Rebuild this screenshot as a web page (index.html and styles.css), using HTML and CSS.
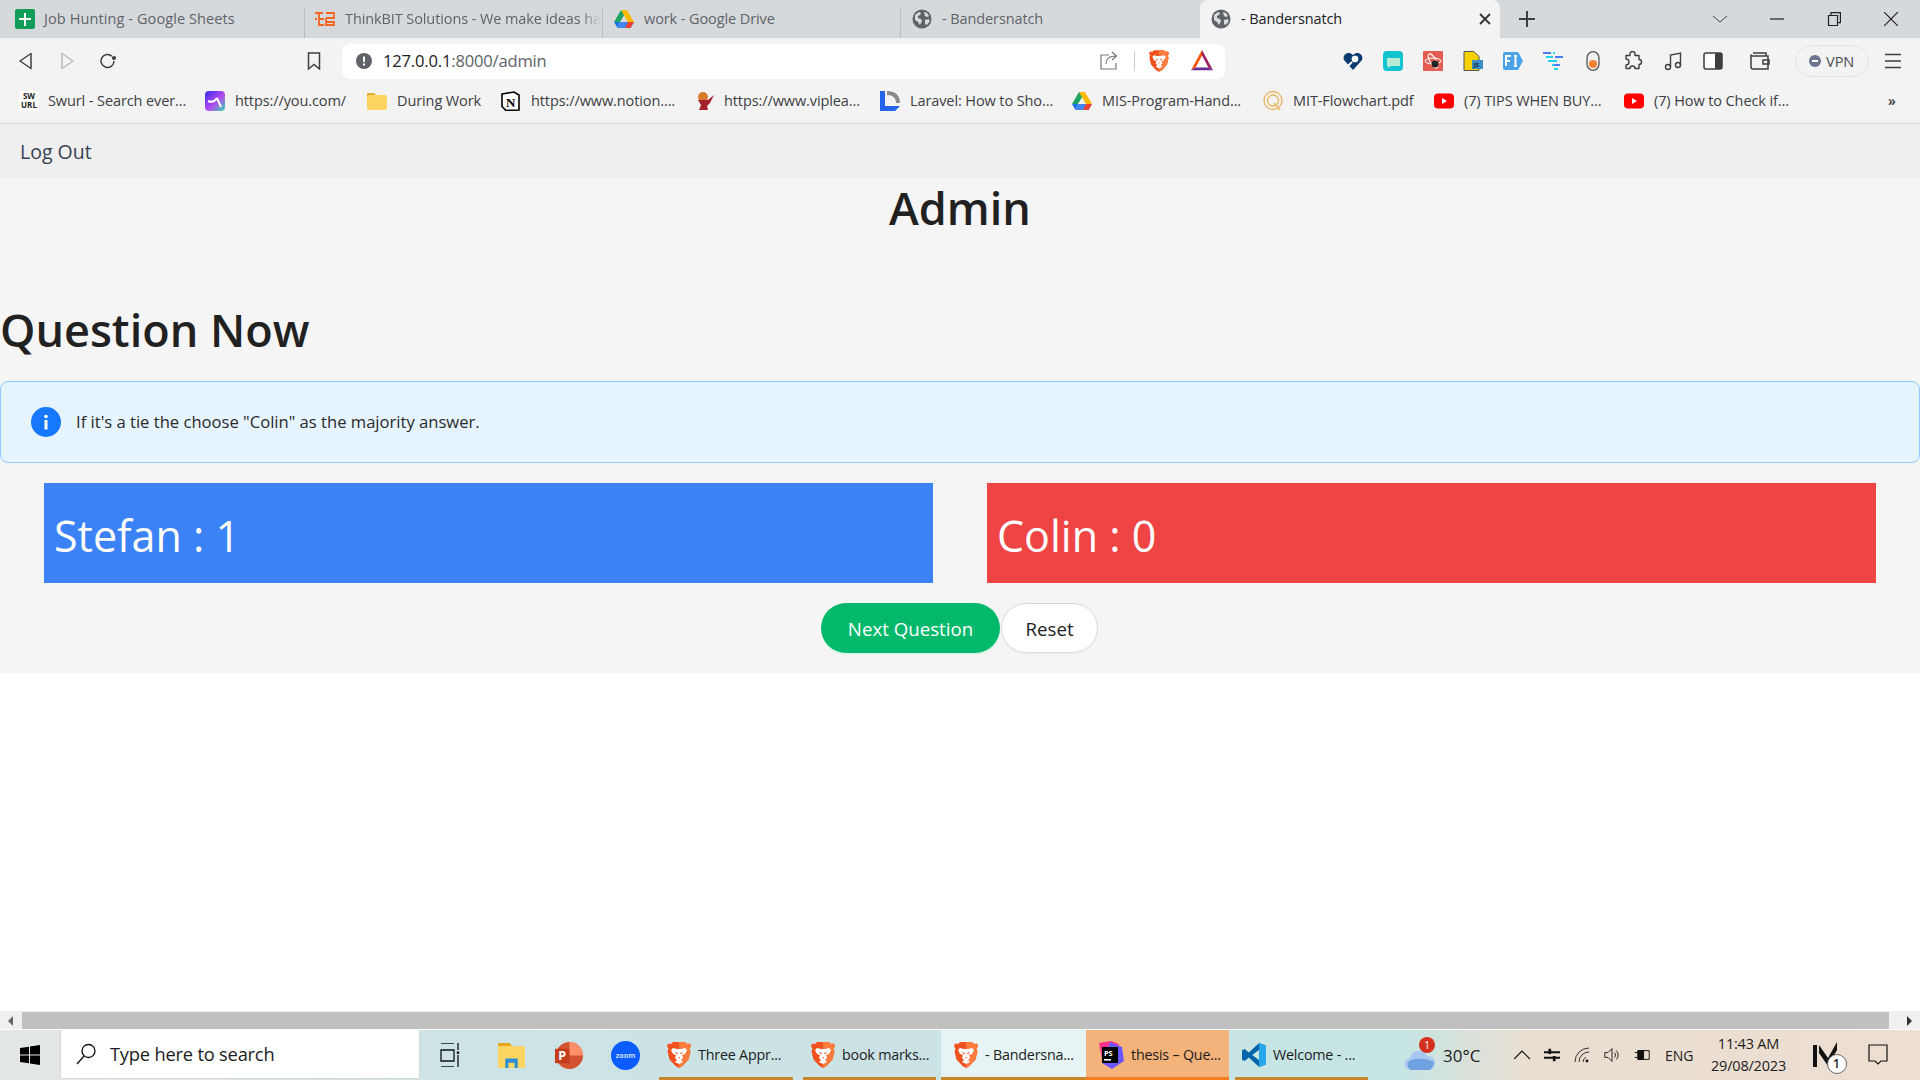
FILE: index.html
```html
<!DOCTYPE html>
<html lang="en">
<head>
<meta charset="utf-8">
<title>Bandersnatch</title>
<link rel="stylesheet" href="styles.css">
</head>
<body>
<svg class="defs" width="0" height="0">
  <symbol id="brave" viewBox="0 0 24 28">
    <path fill="#f1501f" d="M6 1h12l2 2 3-.5 1 3-1.500 2 1 3-2 8-6 6.500-3.500 2-3.500-2-6-6.500-2-8 1-3L0 5.500l1-3 3 .5z"/>
    <path fill="#ff7b3e" d="M12 1h6l2 2 3-.5 1 3-1.500 2 1 3-2 8-6 6.500-3.500 2z"/>
    <path fill="#fff" d="M6 7l4 1h4l4-1 2 2-2 4-3 1 1 3-2 2 2 2-4 2-4-2 2-2-2-2 1-3-3-1-2-4z"/>
    <path fill="#f1501f" d="M8 11l3 1-1 1.500zM16 11l-3 1 1 1.500zM11 16h2l-1 1.500z"/>
  </symbol>
  <symbol id="globe" viewBox="0 0 20 20">
    <circle cx="10" cy="10" r="9.500" fill="#5f6368"/>
    <path fill="#d8dbde" d="M3 6l4-3 2 1-1 2-2 1v2l3 1 1 2-2 4-2-3-3-2zM12 3l3 1 2 3-2 1-2-1zM13 11l4-1 .5 3-3 3-1.500-1z"/>
  </symbol>
  <symbol id="drive" viewBox="0 0 20 18">
    <path fill="#1fa463" d="M7 0h6L6 12H0z"/>
    <path fill="#ffba00" d="M7 0h6l7 12h-6z"/>
    <path fill="#4285f4" d="M3.500 18h13L20 12H6z"/>
    <path fill="#ea4335" d="M14 12h6l-3.500 6H11z"/>
    <path fill="#1a73e8" d="M0 12h6l-2.500 6z"/>
  </symbol>
  <symbol id="yt" viewBox="0 0 20 15">
    <rect width="20" height="15" rx="4" fill="#f00"/>
    <path fill="#fff" d="M8 4.500l5 3-5 3z"/>
  </symbol>
</svg>

<header class="tabstrip">
  <div class="tab sep"><svg class="fav" viewBox="0 0 20 20"><rect width="20" height="20" rx="2" fill="#0f9d58"/><path fill="#fff" d="M9 4h2v5h5v2h-5v6H9v-6H4V9h5z"/></svg><span class="tab-text">Job Hunting - Google Sheets</span></div>
  <div class="tab sep"><svg class="fav" viewBox="0 0 20 16" fill="none" stroke="#f26522" stroke-width="1.800"><path d="M0 2h8M11 2h8v5h-8M4 2v6h5M0 8h2M4 8v6h5M11 7v7h8v-3h-8"/></svg><span class="tab-text fade">ThinkBIT Solutions - We make ideas ha</span></div>
  <div class="tab sep"><svg class="fav"><use href="#drive"/></svg><span class="tab-text">work - Google Drive</span></div>
  <div class="tab"><svg class="fav"><use href="#globe"/></svg><span class="tab-text">- Bandersnatch</span></div>
  <div class="tab active"><svg class="fav"><use href="#globe"/></svg><span class="tab-text">- Bandersnatch</span>
    <svg class="tab-close" viewBox="0 0 12 12" fill="none" stroke="#333" stroke-width="1.800"><path d="M1 1l10 10M11 1L1 11"/></svg></div>
  <svg class="newtab" viewBox="0 0 16 16" fill="none" stroke="#3c4043" stroke-width="2"><path d="M8 0v16M0 8h16"/></svg>
  <div class="wincontrols">
    <svg class="wc" viewBox="0 0 14 14" fill="none" stroke="#444" stroke-width="1"><path d="M0 4l7 6 7-6"/></svg>
    <svg class="wc" viewBox="0 0 14 14" fill="none" stroke="#222" stroke-width="1.200"><path d="M0 7h14"/></svg>
    <svg class="wc" viewBox="0 0 14 14" fill="none" stroke="#222" stroke-width="1.200"><path d="M1.500 3.500h9v10h-9zM4 3.500V.6h9.400v10h-3"/></svg>
    <svg class="wc" viewBox="0 0 14 14" fill="none" stroke="#222" stroke-width="1.200"><path d="M0 0l14 14M14 0L0 14"/></svg>
  </div>
</header>

<nav class="toolbar">
  <div class="navbtns">
    <svg class="tb" viewBox="0 0 20 20" fill="none" stroke="#3c4043" stroke-width="1.500" stroke-linejoin="round"><path d="M15 2.500v15L4 10z"/></svg>
    <svg class="tb" viewBox="0 0 20 20" fill="none" stroke="#b8babc" stroke-width="1.500" stroke-linejoin="round"><path d="M5 2.500v15L16 10z"/></svg>
    <svg class="tb" viewBox="0 0 20 20" fill="none" stroke="#3c4043" stroke-width="1.500"><path d="M16 10a6.500 6.500 0 1 1-2-4.700"/><circle cx="16" cy="7" r="1.300" fill="#3c4043"/></svg>
  </div>
  <svg class="tb bookmark" viewBox="0 0 20 20" fill="none" stroke="#3c4043" stroke-width="1.500"><path d="M4.500 2h11v16L10 13.500 4.500 18z"/></svg>
  <div class="omnibox">
    <svg class="info" viewBox="0 0 16 16"><circle cx="8" cy="8" r="8" fill="#5f6368"/><path fill="#fff" d="M7 3.500h2V9H7zM7 10.500h2v2H7z"/></svg>
    <span class="url"><span class="url-host">127.0.0.1</span>:8000/admin</span>
    <svg class="tb share" viewBox="0 0 20 20" fill="none" stroke="#777" stroke-width="1.200"><path d="M10 4H2v14h15v-6M7 13c0-5 3-8 10-8M13 1l4.500 4-4.500 4"/></svg>
    <span class="omni-sep"></span>
    <svg class="brave-ic"><use href="#brave"/></svg>
    <svg class="bat" viewBox="0 0 24 24"><path fill="#ff5000" d="M12 0L0 22l5-3 7-13z"/><path fill="#9e1f63" d="M12 0l12 22-5-3-7-13z"/><path fill="#662d91" d="M0 22h24l-5-3H5z"/></svg>
  </div>
  <div class="extensions">
    <svg class="ext" viewBox="0 0 20 20"><path fill="#0a3a6e" d="M10 19L1 9C-1 4 5-1 10 4c5-5 11 0 9 5z"/><circle cx="12" cy="8" r="4" fill="#fff" stroke="#0a3a6e"/><path stroke="#fff" stroke-width="2" d="M9 11l-4 4"/></svg>
    <svg class="ext" viewBox="0 0 20 20"><rect width="20" height="20" rx="4" fill="#12c4cf"/><path fill="#b8ead8" d="M4 7h13v8H8l-3 2v-2H4z"/></svg>
    <svg class="ext" viewBox="0 0 20 20"><rect width="20" height="20" rx="1" fill="#e35d52"/><g fill="none" stroke="#fff"><ellipse cx="10" cy="10" rx="8" ry="3"/><ellipse cx="10" cy="10" rx="8" ry="3" transform="rotate(60 10 10)"/></g><circle cx="12" cy="13" r="3.500" fill="#222"/></svg>
    <svg class="ext" viewBox="0 0 20 20"><path fill="#f7d000" stroke="#555" d="M1 .5h10l5 5v14H1z"/><rect x="9" y="9" width="11" height="9" fill="#3b8ec2"/><text class="ext-js" x="10.500" y="16">JS</text></svg>
    <svg class="ext" viewBox="0 0 20 20"><path fill="#4aa3e8" d="M2 1h13l5 9-5 9H2a2 2 0 0 1-2-2V3a2 2 0 0 1 2-2z"/><path stroke="#fff" stroke-width="2" fill="none" d="M3 15V5h5M3 10h4M11 5h3M11 15h3M12.500 5v10"/></svg>
    <svg class="ext" viewBox="0 0 20 20"><g fill="none" stroke-width="2"><path stroke="#4c7cf3" d="M0 2h8M12 6h8"/><path stroke="#22d3ee" d="M10 2h2M3 6h7M5 10h9M9 14h4M11 18h4"/><path stroke="#4c7cf3" d="M11 14h6"/></g></svg>
    <svg class="ext" viewBox="0 0 20 20"><rect x="4" y="0.700" width="12" height="18.600" rx="6" fill="#eee" stroke="#555" stroke-width="1.300"/><circle cx="10" cy="13" r="4" fill="#f58233"/></svg>
    <svg class="ext" viewBox="0 0 20 20" fill="none" stroke="#3c4043" stroke-width="1.400" stroke-linejoin="round"><path d="M7 3a2.500 2.500 0 0 1 5 0v1.500h4v4a2.500 2.500 0 0 1 0 5v4h-4a2.500 2.500 0 0 0-5 0H3v-3.500a2.500 2.500 0 0 0 0-6V4.500h4z"/></svg>
    <svg class="ext" viewBox="0 0 20 20" fill="none" stroke="#3c4043" stroke-width="1.400"><circle cx="5" cy="16" r="2.500"/><circle cx="15" cy="14" r="2.500"/><path d="M7.500 16V4l10-2v12"/></svg>
    <svg class="ext" viewBox="0 0 20 20"><rect x="1" y="2" width="18" height="16" rx="2" fill="#fff" stroke="#3c4043" stroke-width="1.500"/><rect x="12" y="2" width="7" height="16" fill="#3c4043"/></svg>
    <svg class="ext wallet" viewBox="0 0 20 20" fill="none" stroke="#3c4043" stroke-width="1.500"><path d="M18 5H2.500A1.500 1.500 0 0 1 1 3.500V16a2 2 0 0 0 2 2h15zM3 2h13v3"/><path d="M19 9h-6v4h6z"/></svg>
    <div class="vpn"><span class="vpn-dot"></span><span>VPN</span></div>
    <svg class="ext menu" viewBox="0 0 18 16" fill="none" stroke="#3c4043" stroke-width="1.600"><path d="M1 1.500h16M1 8h16M1 14.500h16"/></svg>
  </div>
</nav>

<div class="bookmarks">
  <div class="bm"><span class="swurl">SW<br>URL</span><span>Swurl - Search ever...</span></div>
  <div class="bm"><svg class="fav" viewBox="0 0 20 20"><defs><linearGradient id="yg" x1="0" y1="0" x2="1" y2="1"><stop offset="0" stop-color="#3a2bf0"/><stop offset=".55" stop-color="#b44bf0"/><stop offset="1" stop-color="#35d6a8"/></linearGradient></defs><rect width="20" height="20" rx="4" fill="url(#yg)"/><path fill="none" stroke="#fff" stroke-width="2" d="M3 10c4 2 7 0 9-3M12 7l4 9"/></svg><span>https://you.com/</span></div>
  <div class="bm"><svg class="fav" viewBox="0 0 20 20"><path fill="#e8ad2a" d="M0 3a1 1 0 0 1 1-1h6l2 2h10v3H0z"/><rect y="4" width="20" height="15" rx="2" fill="#fcd462"/></svg><span>During Work</span></div>
  <div class="bm"><svg class="fav" viewBox="0 0 20 20"><path fill="#fff" stroke="#000" stroke-width="1.600" d="M1 3l12-2 5 3v15l-13 .5-4-4z"/><text class="notion-n" x="5" y="16">N</text></svg><span>https://www.notion....</span></div>
  <div class="bm"><svg class="fav" viewBox="0 0 20 20"><circle cx="9" cy="6" r="5" fill="#d97b2c"/><path fill="#a3222c" d="M4 9h10l6-5-4 8-3 3 1 4H5l2-5z"/></svg><span>https://www.viplea...</span></div>
  <div class="bm"><svg class="fav" viewBox="0 0 20 20"><path fill="#2563eb" d="M0 0h5v15h15l-5 5H0z"/><path fill="#8a8a8a" d="M7 0c8 0 13 4 13 12h-4c0-5-3-8-9-8z"/></svg><span>Laravel: How to Sho...</span></div>
  <div class="bm"><svg class="fav"><use href="#drive"/></svg><span>MIS-Program-Hand...</span></div>
  <div class="bm"><svg class="fav" viewBox="0 0 20 20" fill="none" stroke="#eab35c" stroke-width="1.300"><circle cx="10" cy="9.500" r="9"/><circle cx="10" cy="9.500" r="5.500"/><path d="M11 12l6 7"/></svg><span>MIT-Flowchart.pdf</span></div>
  <div class="bm"><svg class="fav"><use href="#yt"/></svg><span>(7) TIPS WHEN BUY...</span></div>
  <div class="bm"><svg class="fav"><use href="#yt"/></svg><span>(7) How to Check if...</span></div>
  <div class="bm-more">»</div>
</div>

<main class="page">
  <div class="navbar"><a class="logout">Log Out</a></div>
  <h1 class="title">Admin</h1>
  <h2 class="subtitle">Question Now</h2>
  <div class="alert">
    <svg class="alert-icon" viewBox="0 0 30 30"><circle cx="15" cy="15" r="15" fill="#1677ff"/><rect x="13.500" y="13" width="3" height="9.500" fill="#fff"/><circle cx="15" cy="9.500" r="1.800" fill="#fff"/></svg>
    <span class="alert-text">If it's a tie the choose "Colin" as the majority answer.</span>
  </div>
  <section class="scores">
    <div class="score blue">Stefan : 1</div>
    <div class="score red">Colin : 0</div>
  </section>
  <div class="actions">
    <button class="btn primary">Next Question</button>
    <button class="btn">Reset</button>
  </div>
</main>

<div class="spacer"></div>

<div class="hscroll">
  <span class="sc-btn"><span class="arrow-l"></span></span>
  <span class="sc-thumb"></span>
  <span class="sc-btn"><span class="arrow-r"></span></span>
</div>

<footer class="taskbar">
  <svg class="start" viewBox="0 0 20 20"><path fill="#000" d="M0 3l9-1.300V9.500H0zM10 1.500L20 0v9.500H10zM0 10.500h9v7.800L0 17zM10 10.500h10V20l-10-1.500z"/></svg>
  <div class="search">
    <svg class="search-ic" viewBox="0 0 20 22" fill="none" stroke="#111" stroke-width="1.300"><circle cx="12.500" cy="8" r="6.500"/><path d="M8 13l-7 8"/></svg>
    <span class="search-text">Type here to search</span>
  </div>
  <div class="pinned">
    <svg class="pin" viewBox="0 0 20 24" fill="none" stroke="#111" stroke-width="1.300"><path d="M1 0h13M1 7h13v11H1zM1 24h13M18 0v7M18 12v12"/><rect x="16.800" y="8.500" width="2.400" height="2.400" fill="#111" stroke="none"/></svg>
    <svg class="pin" viewBox="0 0 28 28"><path fill="#e8a317" d="M1 2h11l3 3H1z"/><rect x="1" y="5" width="26" height="21" fill="#fcd462"/><path fill="#2c8fd6" d="M8 26V17h12v9h-3v-5h-6v5z"/></svg>
    <svg class="pin" viewBox="0 0 30 30"><circle cx="16" cy="15" r="14" fill="#d35230"/><path fill="#ff8f6b" d="M16 1a14 14 0 0 1 14 14H16z"/><rect x="1" y="8" width="15" height="15" rx="1" fill="#c43e1c"/><text class="ppt-p" x="4.500" y="20">P</text></svg>
    <svg class="pin" viewBox="0 0 30 30"><circle cx="15" cy="15" r="15" fill="#0b5cff"/><text class="zoom-t" x="15" y="17.500">zoom</text></svg>
  </div>
  <div class="apps">
    <div class="app"><svg class="app-ic"><use href="#brave"/></svg><span>Three Appr...</span></div>
    <div class="app app-second"><svg class="app-ic"><use href="#brave"/></svg><span>book marks...</span></div>
    <div class="app app-current"><svg class="app-ic"><use href="#brave"/></svg><span>- Bandersna...</span></div>
    <div class="app app-attn"><svg class="app-ic" viewBox="0 0 28 28"><path fill="#ff318c" d="M3 2l12-2 8 3-3 10-14 5z"/><path fill="#6b57ff" d="M14 1l12 5 2 14-12 8-10-6z"/><rect x="6" y="6" width="16" height="16" fill="#000"/><text class="ps-t" x="8" y="14.500">PS</text><rect x="8" y="18" width="7" height="1.600" fill="#fff"/></svg><span>thesis – Que...</span></div>
    <div class="app app-vs"><svg class="app-ic" viewBox="0 0 28 28"><path fill="#0065a9" d="M20 0L8 11 3 7 0 8.500v11L3 21l5-4 12 11 8-3V3zM20 8v12l-8-6z"/><path fill="#28a8ea" d="M20 0l8 3v22l-8 3z"/></svg><span>Welcome - ...</span></div>
  </div>
  <div class="weather">
    <div class="cloud">
      <svg class="cloud-ic" viewBox="0 0 32 22"><path fill="#a8c8f0" d="M7 21a6 6 0 0 1-1-12 9 9 0 0 1 17-2 7 7 0 0 1 2 14z"/><path fill="#6fa0e0" d="M5 12c6-3 16-3 25 1-1 5-3 8-5 8H7a6 6 0 0 1-2-9z"/></svg>
      <span class="badge">1</span>
    </div>
    <span>30°C</span>
  </div>
  <div class="tray">
    <svg class="tray-ic" viewBox="0 0 16 16" fill="none" stroke="#111" stroke-width="1.200"><path d="M0 12l8-8 8 8"/></svg>
    <svg class="tray-ic" viewBox="0 0 18 16" fill="none" stroke="#111" stroke-width="2.200"><path d="M0 5h18M0 11h18"/><path fill="#111" stroke="none" d="M5 1h3v6H5zM10 9h3v6h-3z"/></svg>
    <svg class="tray-ic" viewBox="0 0 16 16" fill="none" stroke="#333" stroke-width="1"><path d="M1 15A14 14 0 0 1 15 1M5 15A10 10 0 0 1 15 5M9 15a6 6 0 0 1 3-5"/><circle cx="13" cy="14" r="1.400" fill="#111" stroke="none"/></svg>
    <svg class="tray-ic" viewBox="0 0 20 18" fill="none" stroke="#111" stroke-width="1.100"><path d="M1 6h4l5-5v16l-5-5H1zM13 6a4 4 0 0 1 0 6M15.500 3.500a8 8 0 0 1 0 11"/></svg>
    <svg class="tray-ic" viewBox="0 0 20 14" fill="none" stroke="#111" stroke-width="1.200"><path d="M5 1.500h14v11H5zM1 4h4M1 10h4"/><rect x="5" y="1.500" width="7" height="11" fill="#111"/></svg>
    <span class="eng">ENG</span>
    <div class="clock"><span>11:43 AM</span><span>29/08/2023</span></div>
    <div class="m-wrap">
      <svg class="m-ic" viewBox="0 0 28 26"><path fill="#111" d="M0 3h4v22H0zM6 3l9 13 9-16v8l-9 16-9-13z"/></svg>
      <span class="m-badge">1</span>
    </div>
    <svg class="notif" viewBox="0 0 20 22" fill="none" stroke="#111" stroke-width="1.200"><path d="M1 1h18v16h-6l-3 3-3-3H1z"/></svg>
  </div>
</footer>
</body>
</html>
```

FILE: styles.css
```css
* { box-sizing: border-box; }
html, body { margin: 0; height: 100%; }
body {
  display: flex;
  flex-direction: column;
  height: 1080px;
  overflow: hidden;
  background: #fff;
  color: #212529;
  font-family: "Open Sans", "Noto Sans", sans-serif;
}
.defs { position: absolute; }
svg { display: block; flex: none; }
span { white-space: nowrap; }

/* Tabs */
.tabstrip {
  display: grid;
  grid-template-columns: 305px 298px 298px 299px 300px 54px 1fr;
  height: 38px;
  background: #d6d9dc;
  align-items: stretch;
}
.tab {
  display: flex;
  align-items: center;
  gap: 10px;
  padding-left: 11px;
  font-size: 14.500px;
  color: #5f6368;
  overflow: hidden;
  letter-spacing: -.1px;
}
.tab:first-child { padding-left: 15px; gap: 9px; letter-spacing: .1px; }
.tab:nth-child(2) { padding-left: 10px; }
.tab.sep { border-right: 1px solid #b9bcc0; margin: 7px 0 0; padding-bottom: 7px; }
.tab.active {
  background: #f3f3f3;
  color: #202124;
  border-radius: 8px 8px 0 0;
  position: relative;
}
.tab-text { flex: none; margin-top: -2px; }
.fade {
  -webkit-mask-image: linear-gradient(90deg, #000 92%, transparent);
  mask-image: linear-gradient(90deg, #000 92%, transparent);
}
.tab-close { width: 12px; height: 12px; margin-left: auto; margin-right: 9px; }
.fav { width: 20px; height: 20px; }
.newtab { width: 16px; height: 16px; align-self: center; margin-left: 19px; }
.wincontrols {
  display: flex;
  align-items: center;
  justify-content: flex-end;
  gap: 43px;
  padding-right: 22px;
}
.wc { width: 14px; height: 14px; }

/* Toolbar */
.toolbar {
  display: flex;
  align-items: center;
  height: 46px;
  padding: 0 0 0 16px;
  background: #f3f3f3;
}
.navbtns { display: flex; gap: 21px; }
.tb { width: 20px; height: 20px; }
.bookmark { margin-left: 186px; }
.omnibox {
  display: flex;
  flex: none;
  align-items: center;
  width: 883px;
  height: 35px;
  margin-left: 18px;
  padding-left: 14px;
  background: #fff;
  border-radius: 8px;
}
.info { width: 16px; height: 16px; }
.url { margin-left: 11px; margin-top: -2px; font-size: 16.600px; color: #5f6368; letter-spacing: -.2px; }
.url-host { color: #202124; }
.share { margin-left: auto; }
.omni-sep { width: 1px; height: 20px; margin-left: 15px; background: #ccc; }
.brave-ic { width: 20px; height: 24px; margin-left: 14px; }
.bat { width: 22px; height: 22px; margin-left: 22px; margin-right: 12px; }
.extensions {
  display: flex;
  align-items: center;
  gap: 20px;
  margin-left: 118px;
  flex: none;
}
.ext { width: 20px; height: 20px; }
.ext-js { font: 700 6px "Open Sans", sans-serif; fill: #123; }
.wallet { margin-left: 7px; }
.vpn {
  display: flex;
  align-items: center;
  gap: 5px;
  width: 74px;
  height: 32px;
  margin-left: 5px;
  padding-left: 13px;
  border: 1px solid #e3e3e3;
  border-radius: 16px;
  font-size: 14.500px;
  color: #4a4d52;
}
.vpn-dot {
  width: 12px;
  height: 12px;
  border-radius: 50%;
  background: #6d7590;
  position: relative;
}
.vpn-dot::after {
  content: "";
  position: absolute;
  left: 3px;
  top: 5px;
  width: 6px;
  height: 2px;
  background: #fff;
}
.menu { width: 18px; height: 16px; margin-left: -5px; }

/* Bookmarks */
.bookmarks {
  display: grid;
  grid-template-columns: 186px 162px 134px 193px 186px 192px 191px 171px 190px 1fr 32px;
  align-items: center;
  height: 40px;
  padding: 0 0 6px 19px;
  background: #f3f3f3;
  border-bottom: 1px solid #d9d9d9;
  font-size: 14.500px;
  color: #3c4043;
  letter-spacing: -.1px;
}
.bm { display: flex; align-items: center; gap: 10px; }
.bm:first-child { gap: 9px; }
.swurl {
  width: 20px;
  height: 20px;
  font: 700 8px/9.500px "Open Sans", sans-serif;
  color: #222;
  background: #fff;
  text-align: center;
  letter-spacing: 0;
}
.notion-n { font: 700 13px "Liberation Serif", serif; fill: #000; }
.bm-more { font-size: 14px; font-weight: 600; color: #333; }

/* Page */
.page { background: #f5f5f5; height: 549px; }
.navbar {
  display: flex;
  align-items: center;
  height: 54px;
  padding-left: 20px;
  background: #efefef;
}
.logout { font-size: 19.500px; font-weight: 500; color: #374151; }
.title {
  margin: 0;
  height: 62px;
  font-size: 45px;
  line-height: 60px;
  font-weight: 600;
  text-align: center;
  color: #212121;
}
.subtitle {
  margin: 60px 0 0;
  height: 61px;
  font-size: 45px;
  line-height: 60px;
  font-weight: 600;
  color: #212121;
}
.alert {
  display: flex;
  align-items: center;
  gap: 15px;
  height: 82px;
  margin-top: 20px;
  padding-left: 30px;
  background: #e6f4ff;
  border: 1px solid #91caff;
  border-radius: 8px;
  font-size: 16.600px;
  color: #2a2a2a;
}
.alert-icon { width: 30px; height: 30px; }
.alert-text { margin-top: -2px; }
.scores {
  display: flex;
  gap: 54px;
  margin-top: 20px;
  padding: 0 44px;
}
.score {
  flex: 1;
  height: 100px;
  padding: 0 10px;
  font-size: 43px;
  line-height: 105px;
  color: #fff;
}
.blue { background: #3b82f6; }
.red { background: #ef4444; }
.actions {
  display: flex;
  justify-content: center;
  gap: 1px;
  margin-top: 20px;
  padding-right: 1px;
}
.btn {
  height: 50px;
  width: 97px;
  border: 1px solid #d9d9d9;
  border-radius: 25px;
  background: #fff;
  color: #222;
  font: 400 18.700px "Open Sans", sans-serif;
  box-shadow: 0 2px 0 rgba(0, 0, 0, .02);
}
.primary {
  width: 179px;
  border: 0;
  background: #02b96b;
  color: #fff;
  box-shadow: 0 2px 0 rgba(5, 255, 145, .1);
}
.spacer { flex: 1; }

/* Horizontal scrollbar */
.hscroll {
  display: flex;
  align-items: stretch;
  gap: 1px;
  height: 18px;
  border-top: 1px solid #ededed;
  background: #f0f0f0;
}
.sc-btn { display: flex; align-items: center; justify-content: center; width: 21px; }
.sc-btn:last-child { width: 30px; padding-left: 8px; }
.sc-thumb { flex: 1; background: #c0c0c0; }
.arrow-l, .arrow-r { width: 0; height: 0; border: 5px solid transparent; }
.arrow-l { border-right: 5px solid #666; border-left: 0; }
.arrow-r { border-left: 5px solid #333; border-right: 0; }

/* Taskbar */
.taskbar {
  display: flex;
  align-items: stretch;
  height: 50px;
  margin-top: 1px;
  background: linear-gradient(90deg, #e3e7e3 0, #dde6e4 300px, #cde3e6 440px, #cbe3e5 1000px, #c5e5e3 1400px, #eaded1 1530px, #ecdfd2 1920px);
  font-size: 15px;
  color: #1c1c1c;
}
.start { width: 20px; height: 20px; align-self: center; margin-left: 20px; }
.search {
  display: flex;
  align-items: center;
  gap: 14px;
  width: 360px;
  margin-left: 20px;
  margin-bottom: 1px;
  padding-left: 15px;
  background: #fff;
  border: 1px solid #d8d8d8;
  border-top: 0;
  font-size: 18.300px;
  letter-spacing: -.2px;
}
.search-ic { width: 20px; height: 24px; }
.search-text { margin-top: -2px; }
.pinned { display: flex; align-items: center; gap: 28px; margin-left: 20px; width: 220px; }
.pin { width: 29px; height: 29px; }
.pin:first-child { width: 20px; height: 24px; margin-right: 9px; }
.ppt-p { font: 700 13px "Open Sans", sans-serif; fill: #fff; }
.zoom-t { font: 700 7.500px "Open Sans", sans-serif; fill: #cfe0ff; text-anchor: middle; }
.apps { display: flex; position: absolute; left: 659px; bottom: 0; height: 50px; }
.app {
  display: flex;
  align-items: center;
  gap: 7px;
  width: 134px;
  margin-right: 10px;
  padding-left: 8px;
  padding-top: 2px;
  border-bottom: 3px solid #c8862a;
  font-size: 14.300px;
  letter-spacing: -.2px;
}
.app-ic { width: 24px; height: 28px; }
.app-second { width: 133px; margin-right: 5px; }
.app-current { width: 145px; margin-right: 0; padding-left: 13px; background: #e7f4f5; }
.app-attn { width: 143px; margin-right: 6px; padding-left: 10px; background: #f4b37a; border-bottom-color: #f57c1f; }
.app-attn .app-ic { width: 28px; height: 28px; }
.app-vs { width: 133px; margin-right: 0; padding-left: 7px; }
.ps-t { font: 700 7.500px "Open Sans", sans-serif; fill: #fff; }
.weather {
  display: flex;
  align-items: center;
  gap: 7px;
  position: absolute;
  left: 1404px;
  bottom: 0;
  height: 50px;
  font-size: 17px;
}
.cloud { position: relative; width: 32px; height: 22px; margin-top: 10px; }
.cloud-ic { width: 32px; height: 22px; }
.badge {
  position: absolute;
  right: 1px;
  top: -12px;
  width: 16px;
  height: 16px;
  border-radius: 50%;
  background: #d3301f;
  color: #fff;
  font-size: 10px;
  line-height: 16px;
  text-align: center;
}
.tray {
  display: flex;
  align-items: center;
  position: absolute;
  left: 1514px;
  right: 0;
  bottom: 0;
  height: 50px;
  gap: 14px;
}
.tray-ic { width: 16px; height: 16px; }
.eng { margin-left: 1px; font-size: 14px; }
.clock {
  display: flex;
  flex-direction: column;
  align-items: center;
  gap: 4px;
  width: 80px;
  margin-left: 1px;
  font-size: 14.500px;
  line-height: 18px;
  letter-spacing: -.2px;
}
.m-wrap { position: relative; width: 28px; height: 26px; margin-left: 10px; }
.m-ic { width: 28px; height: 26px; }
.m-badge {
  position: absolute;
  right: -6px;
  bottom: -6px;
  width: 20px;
  height: 20px;
  border-radius: 50%;
  background: #fff;
  border: 1px solid #666;
  font-size: 12px;
  font-weight: 600;
  line-height: 18px;
  text-align: center;
}
.notif { width: 20px; height: 22px; margin-left: 13px; }
```
